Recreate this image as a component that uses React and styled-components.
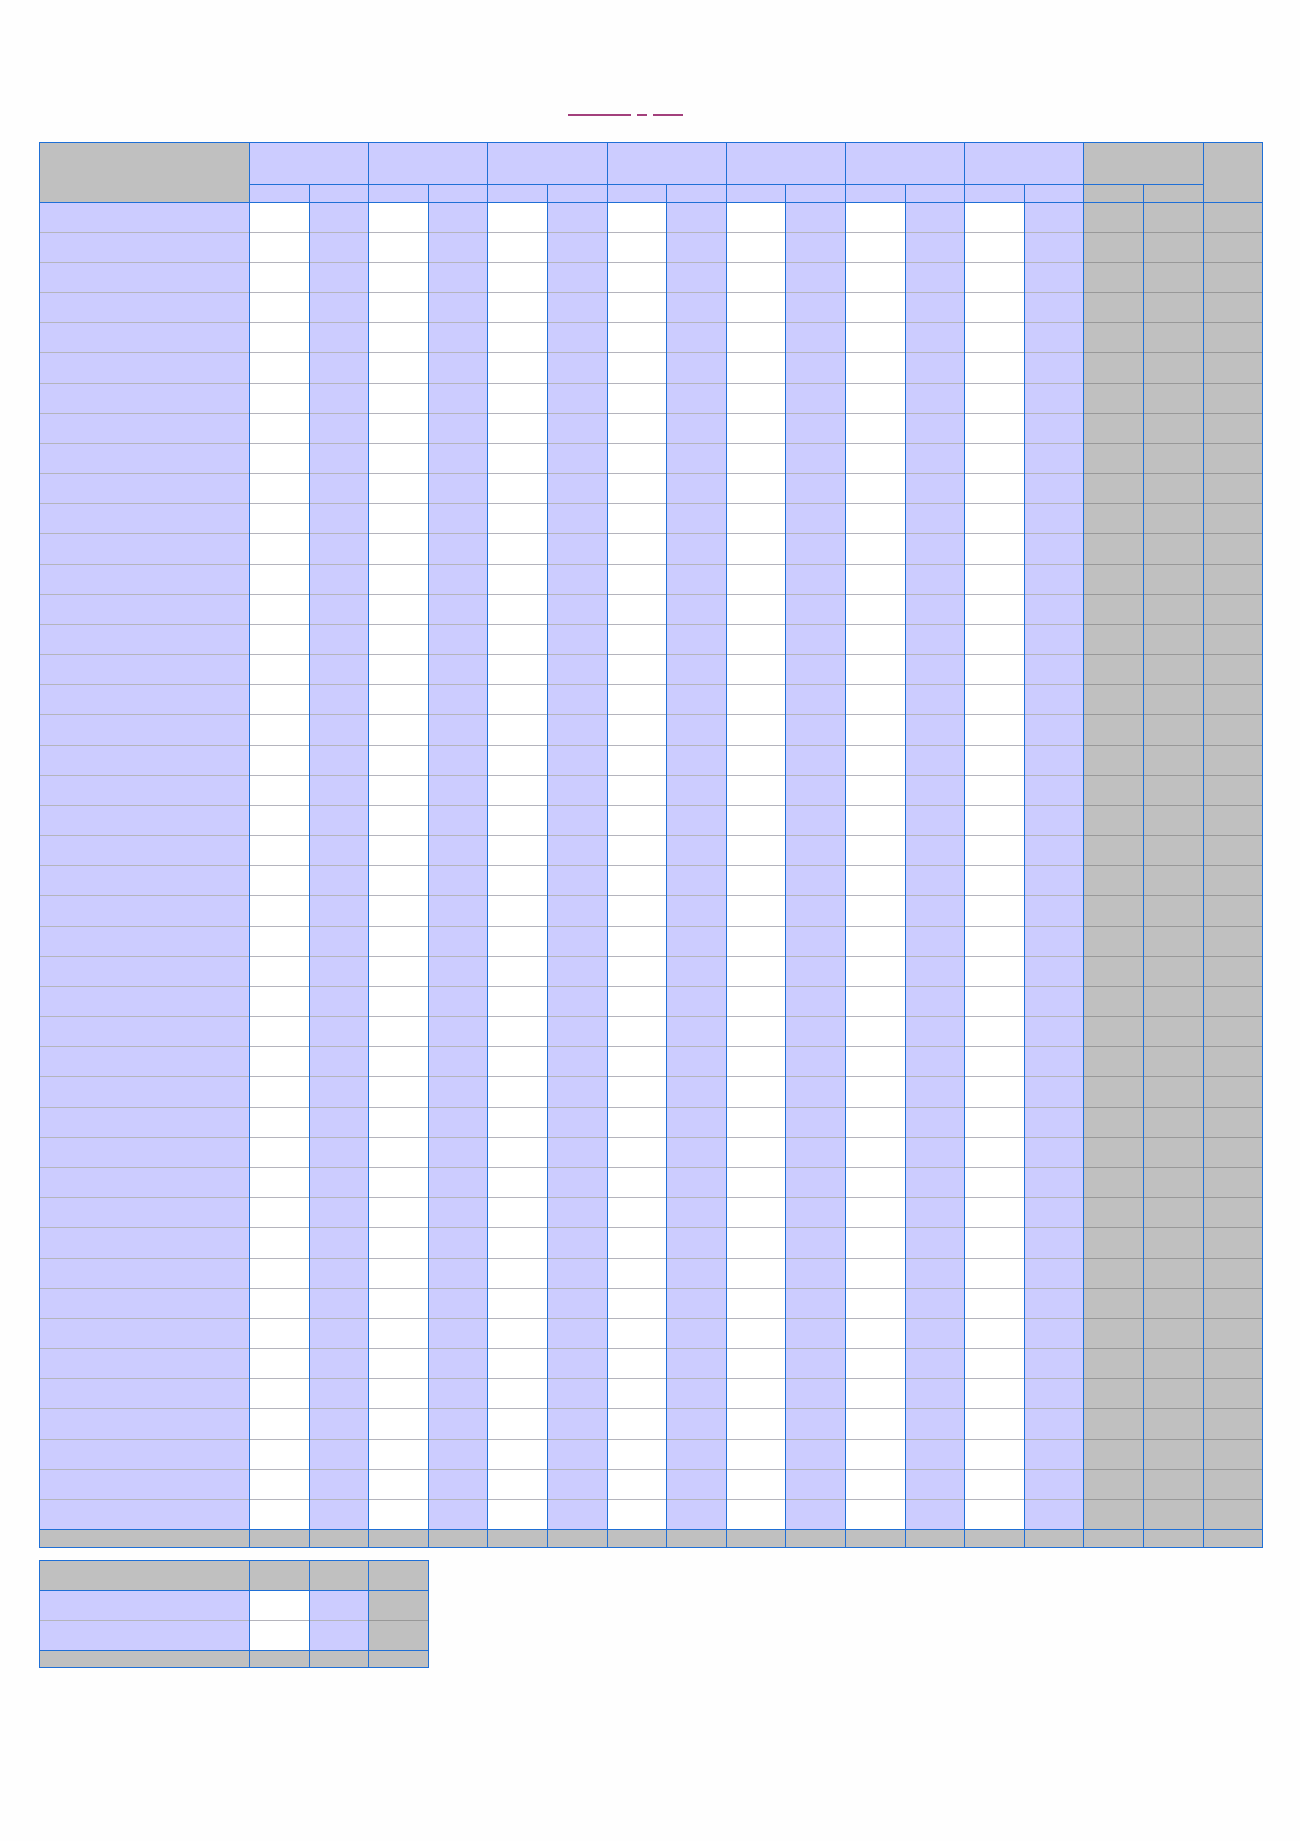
import React from 'react';
import styled, { createGlobalStyle } from 'styled-components';

const colors = {
    page: '#fefefe',
    lavender: '#ccccff',
    grey: '#c0c0c0',
    white: '#ffffff',
    blue: '#1f6fd6',
    rule: '#b4b4bc',
    ruleDark: '#989898',
    title: '#a3407c'
};

const GlobalStyle = createGlobalStyle`
    html, body {
        margin: 0;
        padding: 0;
        background: ${colors.page};
        font-family: "Liberation Sans", Arial, sans-serif;
    }
`;

const Page = styled.div`
    width: 1222px;
    margin: 0 auto;
    padding-top: 104px;
    min-height: 1841px;
    box-sizing: border-box;
`;

const Title = styled.div`
    display: flex;
    gap: 6px;
    height: 38px;
    padding-left: 529px;
    align-items: flex-start;
`;

const Blank = styled.span`
    display: block;
    width: ${(p) => p.w}px;
    height: 10px;
    border-bottom: 2px solid ${colors.title};
`;

const Sheet = styled.table`
    border-collapse: collapse;
    table-layout: fixed;
    width: ${(p) => p.width}px;
    border: 1px solid ${colors.blue};
    margin-bottom: 12px;
`;

const fill = (tone) => colors[tone] || colors.lavender;

// td/th heights in the collapsed model come out one pixel taller than set
const Head = styled.th`
    padding: 0;
    height: ${(p) => p.h}px;
    background: ${(p) => fill(p.tone)};
    border: 1px solid ${colors.blue};
    font-weight: normal;
`;

const Cell = styled.td`
    padding: 0;
    height: ${(p) => p.h || 29.18}px;
    background: ${(p) => fill(p.tone)};
    border-left: 1px solid ${colors.blue};
    border-right: 1px solid ${colors.blue};
    border-top: 1px solid ${(p) => (p.tone === 'grey' ? colors.ruleDark : colors.rule)};
`;

const Foot = styled.td`
    padding: 0;
    height: 16.5px;
    background: ${colors.grey};
    border: 1px solid ${colors.blue};
`;

const SUB = 59.6;
const GROUPS = 8;
const BODY_ROWS = 44;

const mainCols = [210, ...Array(GROUPS * 2 + 1).fill(SUB)];
const bodyTones = [
    'lavender',
    ...Array.from({ length: 14 }, (_, i) => (i % 2 === 0 ? 'white' : 'lavender')),
    'grey',
    'grey',
    'grey'
];

const MainTable = () => (
    <Sheet width={1222}>
        <colgroup>
            {mainCols.map((w, i) => <col key={i} style={{ width: w }} />)}
        </colgroup>
        <thead>
            <tr>
                <Head tone="grey" rowSpan={2} h={41} />
                {Array.from({ length: GROUPS }, (_, g) => (
                    <Head key={g} colSpan={2} h={41} tone={g === GROUPS - 1 ? 'grey' : 'lavender'} />
                ))}
                <Head tone="grey" rowSpan={2} />
            </tr>
            <tr>
                {Array.from({ length: GROUPS * 2 }, (_, i) => (
                    <Head key={i} h={16.5} tone={i >= 14 ? 'grey' : 'lavender'} />
                ))}
            </tr>
        </thead>
        <tbody>
            {Array.from({ length: BODY_ROWS }, (_, r) => (
                <tr key={r}>
                    {bodyTones.map((tone, c) => <Cell key={c} tone={tone} />)}
                </tr>
            ))}
            <tr>
                {mainCols.map((_, c) => <Foot key={c} />)}
            </tr>
        </tbody>
    </Sheet>
);

const sumCols = [210, SUB, SUB, SUB];
const sumTones = ['lavender', 'white', 'lavender', 'grey'];

const SummaryTable = () => (
    <Sheet width={389}>
        <colgroup>
            {sumCols.map((w, i) => <col key={i} style={{ width: w }} />)}
        </colgroup>
        <thead>
            <tr>
                {sumCols.map((_, c) => <Head key={c} tone="grey" h={29} />)}
            </tr>
        </thead>
        <tbody>
            {[0, 1].map((r) => (
                <tr key={r}>
                    {sumTones.map((tone, c) => <Cell key={c} tone={tone} h={29} />)}
                </tr>
            ))}
            <tr>
                {sumCols.map((_, c) => <Foot key={c} />)}
            </tr>
        </tbody>
    </Sheet>
);

const App = () => (
    <Page>
        <GlobalStyle />
        <Title>
            <Blank w={63} />
            <Blank w={10} />
            <Blank w={30} />
        </Title>
        <MainTable />
        <SummaryTable />
    </Page>
);

export default App;
